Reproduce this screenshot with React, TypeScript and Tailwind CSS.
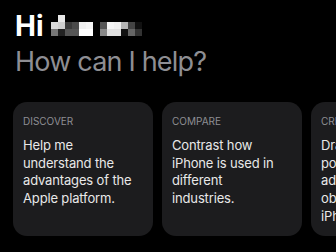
const mosaic = [
  ['bg-black', 'bg-[#e8e8e8]', 'bg-black', 'bg-black', 'bg-black', 'bg-black', 'bg-black', 'bg-black', 'bg-black', 'bg-black', 'bg-black', 'bg-black', 'bg-black'],
  ['bg-[#d9d9d9]', 'bg-[#cfcfcf]', 'bg-[#3a3a3a]', 'bg-[#4a4a4a]', 'bg-[#f0f0f0]', 'bg-[#f5f5f5]', 'bg-black', 'bg-[#555555]', 'bg-[#f5f5f5]', 'bg-[#f0f0f0]', 'bg-[#b5b5b5]', 'bg-[#444444]', 'bg-[#111111]'],
  ['bg-[#777777]', 'bg-[#222222]', 'bg-[#555555]', 'bg-[#555555]', 'bg-white', 'bg-white', 'bg-black', 'bg-[#888888]', 'bg-[#e0e0e0]', 'bg-[#e0e0e0]', 'bg-[#111111]', 'bg-[#666666]', 'bg-[#333333]'],
]

const cards = [
  { label: 'DISCOVER', lines: ['Help me', 'understand the', 'advantages of the', 'Apple platform.'] },
  { label: 'COMPARE', lines: ['Contrast how', 'iPhone is used in', 'different', 'industries.'] },
  { label: 'CREATE', lines: ['Draft a short', 'post about the', 'advantages of', 'obtaining an', 'iPhone.'] },
]

function Card({ label, lines }: { label: string; lines: string[] }) {
  return (
    <div className="w-[140px] h-[134px] shrink-0 rounded-[14px] bg-[#1c1c1e] pl-[10px] pr-[16px] pt-[13px]">
      <div className="text-[10px] leading-[12px] text-[#8e8e93]">{label}</div>
      <p className="mt-[10px] text-[13px] leading-[17.67px] tracking-[-0.15px] text-[#e8e8e8]">
        {lines.map((l, i) => (
          <span key={i} className="block whitespace-nowrap">{l}</span>
        ))}
      </p>
    </div>
  )
}

export default function App() {
  return (
    <div className="w-[336px] h-[252px] overflow-hidden bg-black font-['Inter',sans-serif]">
      <div className="px-[15px] pt-[9px]">
        <div className="flex items-start">
          <span className="text-[28px] leading-[34px] font-bold text-white">Hi</span>
          {/* blurred name */}
          <div className="ml-[7px] mt-[6px] flex flex-col">
            {mosaic.map((row, r) => (
              <div key={r} className="flex">
                {row.map((c, i) => (
                  <div key={i} className={`w-[7px] h-[7px] ${c}`} />
                ))}
              </div>
            ))}
          </div>
        </div>
        <div className="mt-[2px] text-[27px] leading-[34px] tracking-[-0.8px] text-[#8e8e93]">How can I help?</div>
      </div>

      <div className="mt-[23px] flex gap-[9px] pl-[13px]">
        {cards.map(c => (
          <Card key={c.label} {...c} />
        ))}
      </div>
    </div>
  )
}
